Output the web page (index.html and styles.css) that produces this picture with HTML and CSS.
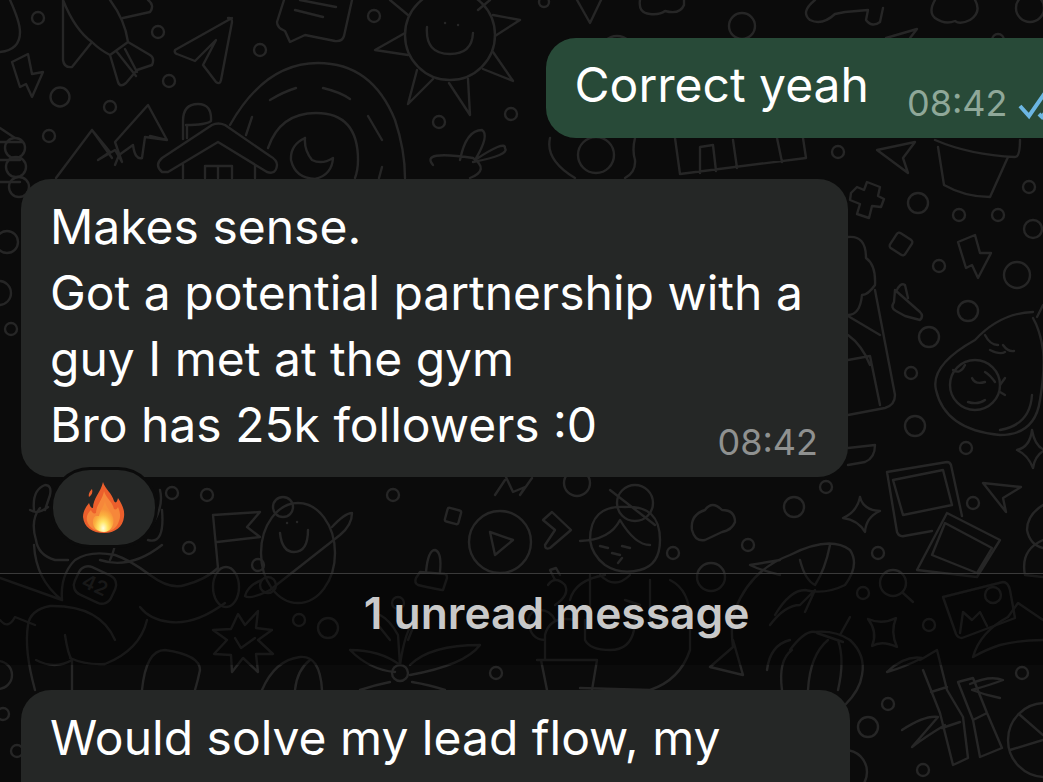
FILE: index.html
```html
<!DOCTYPE html>
<html lang="en">
<head>
    <meta charset="UTF-8">
    <meta name="viewport" content="width=device-width, initial-scale=1.0">
    <title>Chat</title>
    <link rel="stylesheet" href="styles.css">
</head>
<body>
    <!-- wallpaper doodles -->
    <svg class="wallpaper" viewBox="0 0 1043 782" width="1043" height="782" aria-hidden="true">
        <g class="dots">
            <circle cx="38" cy="18" r="6"/><circle cx="158" cy="32" r="6"/><circle cx="169" cy="81" r="6"/>
            <circle cx="60" cy="97" r="9.5"/><circle cx="110" cy="107" r="6"/><circle cx="49" cy="136" r="6"/>
            <circle cx="260" cy="50" r="6"/><circle cx="374" cy="16" r="6"/><circle cx="439" cy="122" r="6"/>
            <circle cx="511" cy="114" r="6"/><circle cx="742" cy="26" r="13"/><circle cx="544" cy="2" r="5"/>
            <circle cx="617" cy="52" r="16"/><circle cx="998" cy="40" r="6"/><circle cx="1030" cy="8" r="14"/>
            <circle cx="838" cy="152" r="6"/><circle cx="918" cy="203" r="10"/><circle cx="959" cy="215" r="6"/>
            <circle cx="998" cy="215" r="6"/><circle cx="1029" cy="187" r="6"/><circle cx="1033" cy="229" r="9"/>
            <circle cx="939" cy="266" r="6"/><circle cx="1017" cy="275" r="13"/><circle cx="968" cy="311" r="10"/>
            <circle cx="929" cy="337" r="10"/><circle cx="911" cy="373" r="6"/><circle cx="915" cy="426" r="10"/>
            <circle cx="966" cy="448" r="6"/><circle cx="973" cy="503" r="6"/><circle cx="794" cy="507" r="10"/>
            <circle cx="826" cy="487" r="6"/><circle cx="748" cy="545" r="6"/><circle cx="711" cy="577" r="14"/>
            <circle cx="878" cy="553" r="6"/><circle cx="863" cy="593" r="6"/><circle cx="929" cy="625" r="6"/>
            <circle cx="1022" cy="673" r="6"/><circle cx="888" cy="704" r="6"/><circle cx="868" cy="727" r="10"/>
            <circle cx="923" cy="770" r="6"/><circle cx="172" cy="493" r="6"/><circle cx="207" cy="495" r="6"/>
            <circle cx="283" cy="507" r="10"/><circle cx="189" cy="548" r="6"/><circle cx="258" cy="565" r="6"/>
            <circle cx="299" cy="620" r="6"/><circle cx="328" cy="628" r="10"/><circle cx="393" cy="495" r="6"/>
            <circle cx="577" cy="483" r="13"/><circle cx="673" cy="553" r="6"/><circle cx="398" cy="603" r="6"/>
            <circle cx="496" cy="673" r="6"/><circle cx="11" cy="329" r="6"/><circle cx="7" cy="242" r="11"/>
            <circle cx="-1" cy="293" r="12"/><circle cx="15" cy="148" r="10"/><circle cx="16" cy="167" r="10"/>
            <circle cx="19" cy="187" r="10"/><circle cx="3" cy="714" r="6"/><circle cx="17" cy="751" r="6"/>
            <circle cx="845" cy="772" r="22"/>
        </g>

        <!-- top band -->
        <path d="M63 0V60Q64 68 72 67L92 42M63 0Q75 30 92 42Q100 50 110 55L128 42Q125 20 110 0M110 55L118 82Q120 88 126 83L137 70L152 65Q155 58 150 55L128 42M117 52L136 76M125 49L137 72M123 18L150 12Q155 5 148 0"/>
        <path d="M0 52Q20 50 20 32Q20 22 10 0"/>
        <path d="M12 62L28 54L32 74L43 72L32 97L26 84L20 87Z"/>
        <path d="M232 18L175 50Q174 53 177 54L195 61L216 40L203 65L216 82Q220 85 221 80L232 22Q232 17 228 18"/>
        <path d="M284 0L277 22Q277 28 285 31L290 42L305 35L335 41Q342 42 344 36L352 0M295 10L323 17M300 0L336 7"/>
        <circle cx="450" cy="35" r="45"/>
        <path d="M493 15L520 20L495 36M405 33L375 50L408 55M417 70L408 104L433 79M449 83L470 115L468 79M493 52L513 81L483 69M408 15L390 0M490 0L478 10M427 27Q425 54 450 54Q472 54 473 33"/>
        <path d="M445 23h.1M458 25h.1"/>
        <path d="M230 125Q265 63 318 63Q372 63 395 120Q405 150 405 178M270 100Q283 92 296 88M323 88Q340 92 350 99M368 116Q375 128 382 140M382 167L379 178M252 117L246 135M268 148Q280 113 316 113Q358 113 358 160Q358 170 355 178M305 138Q290 145 291 160Q295 178 315 179Q332 175 333 158Q322 165 312 160Q304 150 305 138"/>
        <path d="M183 139V121Q183 104 198 104Q212 104 211 121Q206 125 186 125M187 125V138M162 158Q154 165 162 172L168 172L218 142L267 172Q276 175 277 165Q277 160 270 156L225 125Q218 122 212 125ZM183 165V178M255 165V178M205 178V166H232V178M218 166V178"/>
        <path d="M56 178L92 130L110 152L98 160L115 150L122 162L115 142L148 105L167 140L145 137L142 158Q135 160 133 145L119 155L115 165M92 130L112 158M167 140L150 136"/>
        <path d="M0 128L15 138M0 142H22M0 160H20M0 182H20"/>
        <path d="M470 178Q490 170 473 158Q420 150 433 165M460 160Q466 130 482 130Q490 135 475 160Q505 140 505 148Q510 155 473 162"/>
        <path d="M577 0L590 23L601 0M640 0Q638 13 650 14Q660 15 665 11Q680 15 684 5V0M815 0Q800 12 810 20Q822 26 835 14L845 12L868 10L866 20Q872 28 880 22L883 8M935 0Q928 12 935 18Q945 25 955 21Q960 25 970 20Q982 12 975 0"/>
        <path d="M886 38L917 29L910 38"/>
        <path d="M550 138Q545 160 575 178M635 138Q632 150 635 160Q636 172 625 178M675 138L680 174L806 158L803 138M700 173V147L713 145L716 171M737 168L733 140M782 162L777 138"/>
        <circle cx="596" cy="155" r="18"/>
        <path d="M877 150L915 142L903 158L908 173Z"/>
        <path d="M935 140Q970 155 1015 157Q1020 157 1020 140M938 147L944 185Q965 197 990 197L1008 157"/>

        <!-- right column -->
        <path d="M857 187L864 190L867 182L880 187L878 196L884 199L881 207L872 206L869 218L857 214L860 204L850 200L851 193Z"/>
        <rect x="892" y="235" width="18" height="18" rx="3" transform="rotate(33 901 244)"/>
        <path d="M958 242L975 235L980 253L991 253L978 278L972 265L966 268Z"/>
        <path d="M895 290L920 312Q924 316 920 320L905 316L896 311Q890 308 894 302ZM896 292Q900 282 905 285L908 298"/>
        <path d="M848 237Q866 235 866 258Q876 265 875 285Q868 295 862 295Q860 315 848 315M875 290L895 395Q895 405 885 408L848 415M848 316L880 335M848 335Q862 345 870 365M848 360L870 356L880 405"/>
        <path d="M1033 312Q1000 313 975 340Q930 365 936 390Q945 430 1000 435Q1035 435 1040 400Q1045 370 1043 350Q1040 330 1033 318M1037 317L1043 305M985 335Q990 345 998 345M990 350Q1000 355 1005 352M1003 345Q1008 352 1014 351M1000 430Q1030 425 1032 395"/>
        <circle cx="975" cy="385" r="25"/>
        <path d="M953 370Q960 375 965 365M972 378Q975 385 985 382M985 372Q990 375 995 382M968 402Q978 405 985 400M1000 385L1005 378M1000 392L1005 395"/>
        <path d="M848 448L875 445Q875 458 865 462L848 465M1032 430Q1035 447 1045 450Q1035 455 1033 468Q1028 455 1017 450Q1030 447 1032 430M983 483L1021 487L1003 498L1006 512Z"/>
        <path d="M860 497Q863 510 880 511Q866 517 865 532Q858 520 843 518Q857 512 860 497"/>
        <path d="M887 472L947 462Q950 462 951 465L962 516M893 480L943 470L952 505L903 515ZM887 472L897 532Q899 537 904 536L932 531"/>
        <path d="M947 513L1000 540L977 577L917 570M947 513L917 570M945 523L992 548L977 573L932 555Z"/>
        <circle cx="893" cy="583" r="13"/>
        <path d="M903 593L913 602"/>
        <path d="M868 619Q882 625 896 618Q890 632 897 647Q882 640 872 646Q878 632 868 619"/>
        <path d="M943 597L1003 582Q1008 582 1010 590L1015 618L962 638Q958 638 956 634ZM960 633L963 612L972 620L980 612L987 626"/>
        <circle cx="993" cy="595" r="8"/>
        <path d="M973 657Q980 632 1008 617L1018 603L1043 620M1043 640Q1020 640 1000 645Q985 650 973 657"/>
        <path d="M1043 505Q1027 515 1027 530Q1030 545 1043 548M1043 540Q1020 550 1025 575L1043 577"/>
        <path d="M923 670L940 713L953 765L968 758L963 717L947 690L937 650L920 660M958 682L973 720L980 757L1002 748L987 713L973 678L958 682M931 692L947 687M942 728L960 722M973 720L987 713"/>
        <path d="M887 672Q905 655 922 658Q905 667 887 672M902 730Q925 715 938 717L912 747Q925 737 945 725M970 684Q990 675 1003 680Q990 685 972 690Q985 695 1000 698"/>
        <circle cx="1045" cy="740" r="37"/>
        <path d="M1045 703V777M1010 750L1043 740M1020 715L1043 735"/>

        <!-- middle band -->
        <path d="M692 530Q690 515 705 510Q712 500 722 510Q735 510 735 522Q732 530 722 532L705 540Q695 542 692 530Z"/>
        <path d="M735 610Q750 570 790 555Q830 535 850 550Q860 565 845 585Q825 595 805 590Q790 590 775 615M780 575Q760 570 750 565L780 560M800 560Q805 580 815 585Q825 570 830 545M735 610Q730 625 733 647L710 667L743 675L733 640M770 625Q785 605 800 605L815 590L805 612"/>
        <path d="M790 650Q805 630 815 632Q835 630 850 640Q866 655 862 675Q860 690 845 705M767 670Q770 645 790 640M782 690Q778 660 792 650M808 690Q810 655 828 640M838 690Q845 660 838 640M817 633L843 642M840 635L850 617"/>
        <path d="M213 515L260 512L247 527L260 537L217 542M213 515L218 568"/>
        <ellipse cx="298" cy="553" rx="37" ry="50"/>
        <path d="M280 533Q282 552 294 552Q308 552 308 530M287 523h.1M297 522h.1M332 527Q345 513 352 513Q352 525 340 535L270 590Q250 600 245 596Q248 585 262 580"/>
        <circle cx="268" cy="585" r="8"/>
        <rect x="446" y="509" width="14" height="14" rx="2" transform="rotate(15 453 516)"/>
        <circle cx="500" cy="542" r="31"/>
        <path d="M490 532L513 540L495 555Z"/>
        <path d="M420 572L445 574Q447 574 447 578L443 590Q440 590 418 585Q414 583 416 578ZM426 572Q428 550 435 550Q442 552 440 572"/>
        <path d="M543 520L552 512L571 530L550 548Q545 550 545 545L555 530Z"/>
        <path d="M505 475L513 492L525 487L520 495L532 478M495 495L505 480"/>
        <circle cx="635" cy="503" r="18"/>
        <path d="M590 540Q590 505 625 507Q660 505 660 540Q660 565 640 570Q620 575 605 565Q592 555 590 540ZM580 541Q610 540 620 520Q635 545 650 545M610 490L655 525M600 546L608 548M622 546L630 548M612 553L620 555M622 558L618 563"/>
        <path d="M605 575Q575 580 570 600M670 580Q690 590 690 620V650Q680 680 650 690L580 688M590 575V620M650 580V620M600 575Q615 590 630 575M585 620V640Q590 650 610 650Q630 650 634 630L635 620M625 600L640 605"/>
        <path d="M537 660H597L592 690M541 660L547 690M545 660V635Q550 615 575 620M545 640Q530 640 528 620Q530 610 540 610Q550 610 555 620M555 580L550 570L556 568L560 575M548 585Q555 575 565 585Q570 595 555 605"/>
        <path d="M400 665L398 635Q390 620 380 615M400 665Q405 630 415 620M400 665Q380 650 350 650Q370 670 395 672M410 665Q430 645 480 645Q465 665 410 675M390 682Q375 685 360 690M412 682Q430 685 445 690M390 640L378 625M408 640L414 625"/>
        <circle cx="400" cy="673" r="8"/>

        <!-- left band -->
        <path d="M238 614L245 625L258 611L256 628L272 630L258 640L273 654L256 654L258 672L243 658L232 672L231 655L214 654L227 640L213 630L231 629Z"/>
        <path d="M235 638L241 648L255 638"/>
        <path d="M142 690Q146 650 165 650Q200 655 200 670Q198 680 195 690M262 690Q275 660 300 657Q320 655 322 690M295 690Q297 670 310 660"/>
        <path d="M160 490Q165 510 145 535Q130 540 116 536Q115 550 110 560M148 540Q165 545 162 510M100 560Q130 570 162 545M40 508Q30 520 36 540Q38 555 55 560L68 560M34 545Q36 580 62 600M62 600L0 578"/>
        <path d="M34 510Q32 490 45 485Q52 485 50 495L45 510M30 510Q38 515 48 507"/>
        <rect x="75" y="570" width="40" height="30" rx="10" transform="rotate(25 95 585)"/>
        <text class="tag" x="95" y="592" transform="rotate(25 95 585)" text-anchor="middle">42</text>
        <path d="M62 600Q60 575 75 560Q90 550 115 555Q130 560 150 575Q170 590 185 585Q205 580 218 568"/>
        <ellipse cx="226" cy="587" rx="13" ry="20"/>
        <path d="M225 603Q195 625 170 622Q150 620 140 607M147 620Q140 650 105 664Q85 665 70 658M115 640Q100 605 50 606Q30 610 28 625Q24 650 35 690M72 660V690M65 635Q68 655 72 660Q55 670 36 660"/>
        <path d="M0 620Q8 630 15 617L35 625"/>
        <circle cx="-2" cy="675" r="14"/>
    </svg>

    <main class="chat">
        <div class="bubble out">
            <span class="text">Correct yeah</span>
            <span class="time">08:42</span>
            <svg class="ticks" viewBox="0 0 34 28" width="34" height="28" aria-hidden="true">
                <path d="M3 15L12 25L30 -1"/>
                <path d="M22 23L25 26L34 14"/>
            </svg>
        </div>

        <div class="bubble in first">
            <p class="text">Makes sense.<br>Got a potential partnership with a<br>guy I met at the gym<br>Bro has 25k followers :0</p>
            <span class="time stamp">08:42</span>
        </div>

        <div class="reaction">
            <svg class="flame" viewBox="0 0 42 52" width="42" height="52" aria-hidden="true">
                <defs>
                    <radialGradient id="core" cx="50%" cy="88%" r="62%">
                        <stop offset="0" stop-color="#fffde0"/>
                        <stop offset=".35" stop-color="#ffe566"/>
                        <stop offset=".7" stop-color="#fbb03f"/>
                        <stop offset="1" stop-color="#f7913a"/>
                    </radialGradient>
                </defs>
                <path fill="#ec5f2c" d="M20 0C22 7 29 11 31 19C33 22 34 20 35 16C39 22 42 28 41 35C40 45 32 51 21 51C9 51 1 45 0 35C0 29 3 25 6 21C7 24 8 26 10 26C10 16 18 10 20 0Z"/>
                <path fill="#ec5f2c" d="M6 15C5 12 7 9 9 7C10 10 9 13 6 15Z"/>
                <path fill="#f6873a" d="M21 9C23 16 29 19 31 27C33 28 34 27 35 25C37 30 38 34 36 39C34 46 28 50 21 50C13 50 6 46 4 39C3 34 5 31 8 28C9 31 11 32 13 31C13 23 20 17 21 9Z"/>
                <path fill="url(#core)" d="M22 19C23 26 28 29 30 35C32 42 28 50 21 50C14 50 9 45 10 38C11 33 14 34 16 34C17 28 21 25 22 19Z"/>
            </svg>
        </div>

        <div class="unread">1 unread message</div>

        <div class="bubble in last">
            <p class="text">Would solve my lead flow, my</p>
        </div>
    </main>
</body>
</html>
```

FILE: styles.css
```css
* {
    margin: 0;
    padding: 0;
    box-sizing: border-box;
}

html, body {
    height: 782px;
    overflow: hidden;
}

body {
    font-family: 'Inter', 'Liberation Sans', sans-serif;
    background: #0b0b0b;
    color: #fff;
    position: relative;
}

.wallpaper {
    position: absolute;
    top: 0;
    left: 0;
    fill: none;
    stroke: #262626;
    stroke-width: 2.4;
    stroke-linecap: round;
    stroke-linejoin: round;
}

.wallpaper .tag {
    fill: #262626;
    stroke: none;
    font-size: 20px;
    font-weight: 600;
}

.chat {
    position: relative;
    display: flex;
    flex-direction: column;
    padding-top: 38px;
}

.bubble {
    border-radius: 30px;
    font-size: 48px;
    line-height: 66px;
    padding: 15px 30px 19px 29px;
}

.bubble.out {
    align-self: flex-end;
    display: flex;
    align-items: flex-end;
    background: #284a38;
    height: 100px;
    margin-right: -30px;
    padding: 14px 22.5px 20px 29px;
}

.bubble.in {
    background: #252726;
    margin-left: 21px;
    position: relative;
}

.bubble.first {
    width: 827px;
    margin-top: 41px;
}

.bubble.last {
    width: 829px;
    height: 92px;
    margin-top: 25px;
    border-radius: 30px 30px 0 0;
}

.time {
    font-size: 36px;
    line-height: 40px;
    color: #8fa899;
    margin-left: 38px;
    margin-bottom: -5px;
}

.stamp {
    position: absolute;
    right: 30px;
    bottom: 15px;
    margin: 0;
    color: #8f9190;
}

.ticks {
    margin-left: 9px;
    margin-bottom: -1px;
    fill: none;
    stroke: #6cb6e3;
    stroke-width: 4;
    overflow: visible;
}

.reaction {
    position: relative;
    width: 108px;
    height: 81px;
    margin: -10px 0 0 50px;
    display: flex;
    align-items: center;
    justify-content: center;
    background: #252726;
    border: 3px solid #0b0b0b;
    border-radius: 40px;
}

.unread {
    margin-top: 25px;
    height: 92px;
    padding: 13px 0 0 70px;
    text-align: center;
    font-size: 44.3px;
    line-height: 52px;
    font-weight: 600;
    color: #c9c9c9;
    background: rgba(0, 0, 0, 0.35);
    border-top: 1.5px solid #3a3a3a;
}
```
